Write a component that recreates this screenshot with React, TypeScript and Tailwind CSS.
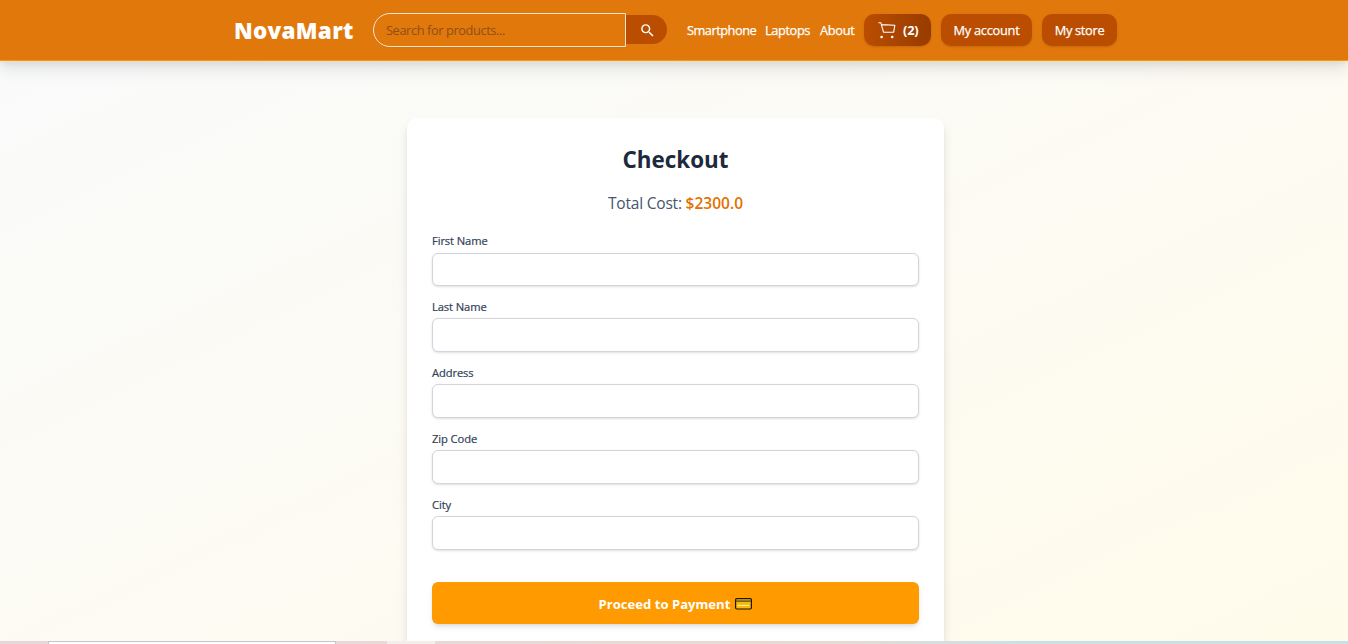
import { MdSearch } from "react-icons/md";

const fields = ["First Name", "Last Name", "Address", "Zip Code", "City"];

function CartIcon() {
  return (
    <svg width="18" height="17" viewBox="0 0 18 17" fill="none" stroke="currentColor" strokeWidth="1.1" strokeLinecap="round" strokeLinejoin="round">
      <path d="M0.8 0.8h2.1l2.6 9.4h10.2l1.1-6.9L3.6 2.6" />
      <circle cx="3.6" cy="15" r="1.3" fill="currentColor" stroke="none" />
      <circle cx="14.2" cy="15" r="1.3" fill="currentColor" stroke="none" />
    </svg>
  );
}

function CardIcon() {
  return (
    <svg width="17" height="12" viewBox="0 0 17 12">
      <rect x="0.6" y="0.6" width="15.8" height="10.4" rx="1.2" fill="#f8b90c" stroke="#1b1603" strokeWidth="1.2" />
      <path d="M1 3.1h15" stroke="#6a551c" strokeWidth="1.5" />
      <path d="M2.3 7.4h11.5" stroke="#fff0a8" strokeWidth="1" />
    </svg>
  );
}

function Header() {
  return (
    <header className="relative flex h-[61px] shrink-0 items-start border-b border-[#fe9a00] bg-[#e1780c] pl-[234px] text-white shadow-[0_8px_15px_rgba(0,0,0,0.1),0_3px_6px_rgba(0,0,0,0.05)]">
      <div className="mt-[14px] w-[139px] whitespace-nowrap text-[22.5px] leading-[34px] font-extrabold tracking-[0.25px]">NovaMart</div>
      <div className="mt-[13px] flex w-[314px] items-start">
        <input
          placeholder="Search for products..."
          className="h-[34px] w-[253px] rounded-l-full border border-[#f3e3d2] bg-transparent px-3 text-[12.8px] tracking-[-0.4px] shadow-xs outline-none placeholder:text-[#904f14]"
        />
        <button className="mt-[2px] flex h-[29px] w-[41px] items-center justify-center rounded-r-full bg-[#bb4d00] pt-[2px] pl-[2px]">
          <MdSearch size={17} />
        </button>
      </div>
      <nav className="mt-[14px] flex h-8 items-center text-[12.8px] font-medium whitespace-nowrap tracking-[-0.5px] [-webkit-text-stroke:0.25px_currentColor]">
        <a className="w-[78px] pt-[2px]">Smartphone</a>
        <a className="w-[55px] pt-[2px] tracking-[-0.4px]">Laptops</a>
        <a className="w-[44px] pt-[2px] tracking-[-0.3px]">About</a>
        <button className="mr-[10px] flex h-8 w-[67px] items-center gap-[7px] rounded-[10px] bg-linear-to-r from-[#bb4d00] to-[#973c00] pl-[14px] font-bold tracking-[-0.2px] shadow-sm [-webkit-text-stroke:0px]">
          <CartIcon />
          <span className="pt-[2px]">(2)</span>
        </button>
        <button className="mr-[10px] h-8 w-[91px] rounded-[10px] bg-[#bb4d00] pt-[2px] tracking-[-0.25px] shadow-sm">My account</button>
        <button className="h-8 w-[75px] rounded-[10px] bg-[#bb4d00] pt-[2px] tracking-[-0.3px] shadow-sm">My store</button>
      </nav>
    </header>
  );
}

export default function App() {
  return (
    <div className="flex h-[644px] flex-col overflow-hidden bg-white font-['Open_Sans','Noto_Sans',sans-serif]">
      <div className="flex h-[641px] shrink-0 flex-col overflow-hidden bg-linear-to-br from-[#f9fafb] to-[#fffbeb]">
        <Header />
        <main className="mt-[57px] ml-[407px] h-[560px] w-[537px] shrink-0 rounded-[10px] bg-white px-[25px] pt-[26px] shadow-[0_8px_12px_rgba(0,0,0,0.08),0_3px_5px_rgba(0,0,0,0.05)]">
          <h1 className="text-center text-[22.4px] leading-8 font-bold text-[#1d293d]">Checkout</h1>
          <p className="mt-[14px] text-center text-[15.5px] leading-[26px] tracking-[-0.2px] text-[#45556c]">
            Total Cost: <span className="font-semibold tracking-normal text-[#e17100]">$2300.0</span>
          </p>
          <form className="mt-[17px]">
            {fields.map((label) => (
              <div key={label} className="h-[65.85px]">
                <label className="block h-[19.6px] pt-[0.3px] text-[11.2px] leading-[16px] font-medium tracking-[-0.1px] text-[#314158] [-webkit-text-stroke:0.2px_currentColor]">{label}</label>
                <input className="block h-[33.8px] w-full rounded-md border border-[#d1d5dc] bg-white shadow-sm outline-none" />
              </div>
            ))}
            <button type="button" className="mt-[19.75px] flex h-[42px] w-full items-center justify-center gap-[5px] rounded-md bg-[#ff9a00] pt-[3px] text-[13.1px] font-bold text-white shadow-md">
              <span>Proceed to Payment</span>
              <CardIcon />
            </button>
          </form>
        </main>
      </div>
      <div className="flex h-[3px] shrink-0 bg-linear-to-r from-[#e6d9da] via-[#e8dad3] via-60% to-[#cce0e4] to-75%">
        <div className="ml-12 w-72 border-x border-t border-[#c5c6c8] bg-white" />
        <div className="ml-[51px] w-12 bg-[#f4eeeb]" />
      </div>
    </div>
  );
}
